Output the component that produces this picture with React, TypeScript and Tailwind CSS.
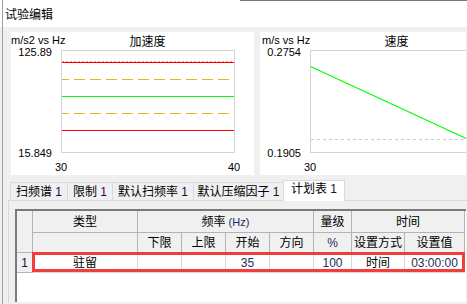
const TABS = [
  { label: '扫频谱', w: 'w-[58px] border-l' },
  { label: '限制', w: 'w-[45px]' },
  { label: '默认扫频率', w: 'w-[81px]' },
  { label: '默认压缩因子', w: 'w-[90px]' },
]

const HEAD = 'bg-[#f0f0f0] border-r border-b border-[#b4b4b4] flex items-center justify-center text-[12px] leading-[16px] whitespace-nowrap'
const CELL = 'row-start-3 bg-white border-r border-b border-[#d8d8d8] flex items-center justify-center text-[12px] leading-[16px] whitespace-nowrap'
const NUM = 'text-[11px] text-[#1f2d5c]'

function Chart({ unit, title, top, bottom, unitPad, width, showEnd, children }: {
  unit: string; title: string; top: string; bottom: string; unitPad: string; width: string; showEnd: boolean; children: React.ReactNode
}) {
  return (
    <div className={`${width} h-[143px] bg-white overflow-hidden flex flex-col`}>
      {/* header: unit label + centred title */}
      <div className="grid h-[18px] shrink-0">
        <span className={`col-start-1 row-start-1 ${unitPad} pt-[2px] text-[11px] leading-[12px] whitespace-nowrap`}>{unit}</span>
        <span className="col-start-1 row-start-1 w-[223px] pl-[50px] pt-[2px] text-center text-[12px] leading-[16px]">{title}</span>
      </div>
      <div className="flex shrink-0">
        <div className="w-[50px] shrink-0 pr-[9px] -mt-[4px] -mb-[6px] flex flex-col justify-between items-end text-[11px] leading-[12px]">
          <span>{top}</span>
          <span>{bottom}</span>
        </div>
        <svg width="174" height="103" className="shrink-0 block">
          <rect x="0.5" y="0.5" width="173" height="102" fill="none" stroke="#d4d4d4" />
          {children}
        </svg>
      </div>
      <div className="ml-[50px] w-[173px] mt-[8px] flex justify-between text-[11px] leading-[12px] shrink-0">
        <span className="w-0 flex justify-center"><span>30</span></span>
        {showEnd && <span className="w-0 flex justify-center"><span>40</span></span>}
      </div>
    </div>
  )
}

export default function App() {
  return (
    <div className="w-[467px] h-[304px] overflow-hidden bg-[#f0f0f0] font-['Liberation_Sans','Noto_Sans_CJK_SC',sans-serif] text-black">
      {/* title bar */}
      <div className="h-[27px] bg-white pl-[2px] flex">
        <div className="flex-1 border-l border-[#a0a0a0] flex">
          <div className="w-[237px] pl-[2px] pt-[7px] text-[12px] leading-[16px]">试验编辑</div>
          <div className="flex-1 border-t border-[#787878]" />
        </div>
      </div>

      <div className="h-[277px] pl-[2px] flex">
        <div className="flex-1 border-l border-[#a0a0a0] flex flex-col">
          {/* charts */}
          <div className="flex gap-[6px] pt-[5px] pl-[8px] h-[148px]">
            <Chart unit="m/s2 vs Hz" title="加速度" top="125.89" bottom="15.849" unitPad="pl-0" width="w-[243px]" showEnd>
              <line x1="1" x2="173" y1="11.5" y2="11.5" stroke="#ff9c9c" strokeDasharray="2 2" />
              <line x1="1" x2="173" y1="12.5" y2="12.5" stroke="#ff0000" />
              <line x1="1" x2="173" y1="29.5" y2="29.5" stroke="#f2b01e" strokeDasharray="11 5" strokeDashoffset="4" />
              <line x1="1" x2="173" y1="46.5" y2="46.5" stroke="#00ff00" />
              <line x1="1" x2="173" y1="63.5" y2="63.5" stroke="#f2b01e" strokeDasharray="11 5" strokeDashoffset="4" />
              <line x1="1" x2="173" y1="80.5" y2="80.5" stroke="#ff0000" />
            </Chart>
            <Chart unit="m/s vs Hz" title="速度" top="0.2754" bottom="0.1905" unitPad="pl-[2px]" width="w-[206px]" showEnd={false}>
              <line x1="1" x2="173" y1="89.5" y2="89.5" stroke="#cccccc" strokeDasharray="3 3" />
              <line x1="0.5" x2="173" y1="16.5" y2="96.3" stroke="#00ff00" strokeWidth="1.2" />
            </Chart>
          </div>

          {/* tabs */}
          <div className="pt-[5px]">
            <div className="h-[20px] pl-[7px] flex items-end">
              {TABS.map(t => (
                <div key={t.label} className={`${t.w} h-[18px] border-t border-r border-[#d9d9d9] pt-[1px] text-center text-[12px] leading-[16px] whitespace-nowrap`}>
                  {t.label} <span className="text-[#2a0a3a]">1</span>
                </div>
              ))}
              <div className="relative z-10 -ml-px -mb-px w-[62px] h-[21px] bg-white border-t border-l border-r border-[#d9d9d9] text-center text-[12px] leading-[16px] whitespace-nowrap">
                计划表 <span className="text-[#2a0a3a]">1</span>
              </div>
            </div>

            {/* tab panel */}
            <div className="ml-[5px] border-t border-l border-[#d9d9d9] pt-[8px] pl-[6px] h-[103px]">
              <div className="w-[451px] h-[93px] bg-white border-t-2 border-l-2 border-[#7a7a7a]">
                <div className="grid grid-cols-[16px_105px_44px_44px_44px_44px_38px_53px_60px] grid-rows-[22px_20px_20px]">
                  <div className={`${HEAD} row-start-1 row-span-2 col-start-1`} />
                  <div className={`${HEAD} row-start-1 col-start-2`}>类型</div>
                  <div className={`${HEAD} row-start-1 col-start-3 col-span-4`}>频率 <span className="text-[11px] text-[#1f2d5c] ml-[3px]">(Hz)</span></div>
                  <div className={`${HEAD} row-start-1 col-start-7`}>量级</div>
                  <div className={`${HEAD} row-start-1 col-start-8 col-span-2`}>时间</div>

                  <div className={`${HEAD} row-start-2 col-start-2`} />
                  <div className={`${HEAD} row-start-2 col-start-3`}>下限</div>
                  <div className={`${HEAD} row-start-2 col-start-4`}>上限</div>
                  <div className={`${HEAD} row-start-2 col-start-5`}>开始</div>
                  <div className={`${HEAD} row-start-2 col-start-6`}>方向</div>
                  <div className={`${HEAD} row-start-2 col-start-7 ${NUM}`}>%</div>
                  <div className={`${HEAD} row-start-2 col-start-8`}>设置方式</div>
                  <div className={`${HEAD} row-start-2 col-start-9`}>设置值</div>

                  <div className={`${HEAD} row-start-3 col-start-1 text-[11px] text-[#2a0a3a]`}>1</div>
                  <div className={`${CELL} col-start-2`}>驻留</div>
                  <div className={`${CELL} col-start-3`} />
                  <div className={`${CELL} col-start-4`} />
                  <div className={`${CELL} col-start-5 ${NUM}`}>35</div>
                  <div className={`${CELL} col-start-6`} />
                  <div className={`${CELL} col-start-7 ${NUM}`}>100</div>
                  <div className={`${CELL} col-start-8`}>时间</div>
                  <div className={`${CELL} col-start-9 ${NUM}`}>03:00:00</div>

                  {/* highlighted row */}
                  <div className="row-start-3 col-start-2 col-end-10 -ml-px -mt-px h-[20px] self-start border-[3px] border-[#f23d3d] pointer-events-none" />
                </div>
              </div>
            </div>
          </div>
        </div>
      </div>
    </div>
  )
}
